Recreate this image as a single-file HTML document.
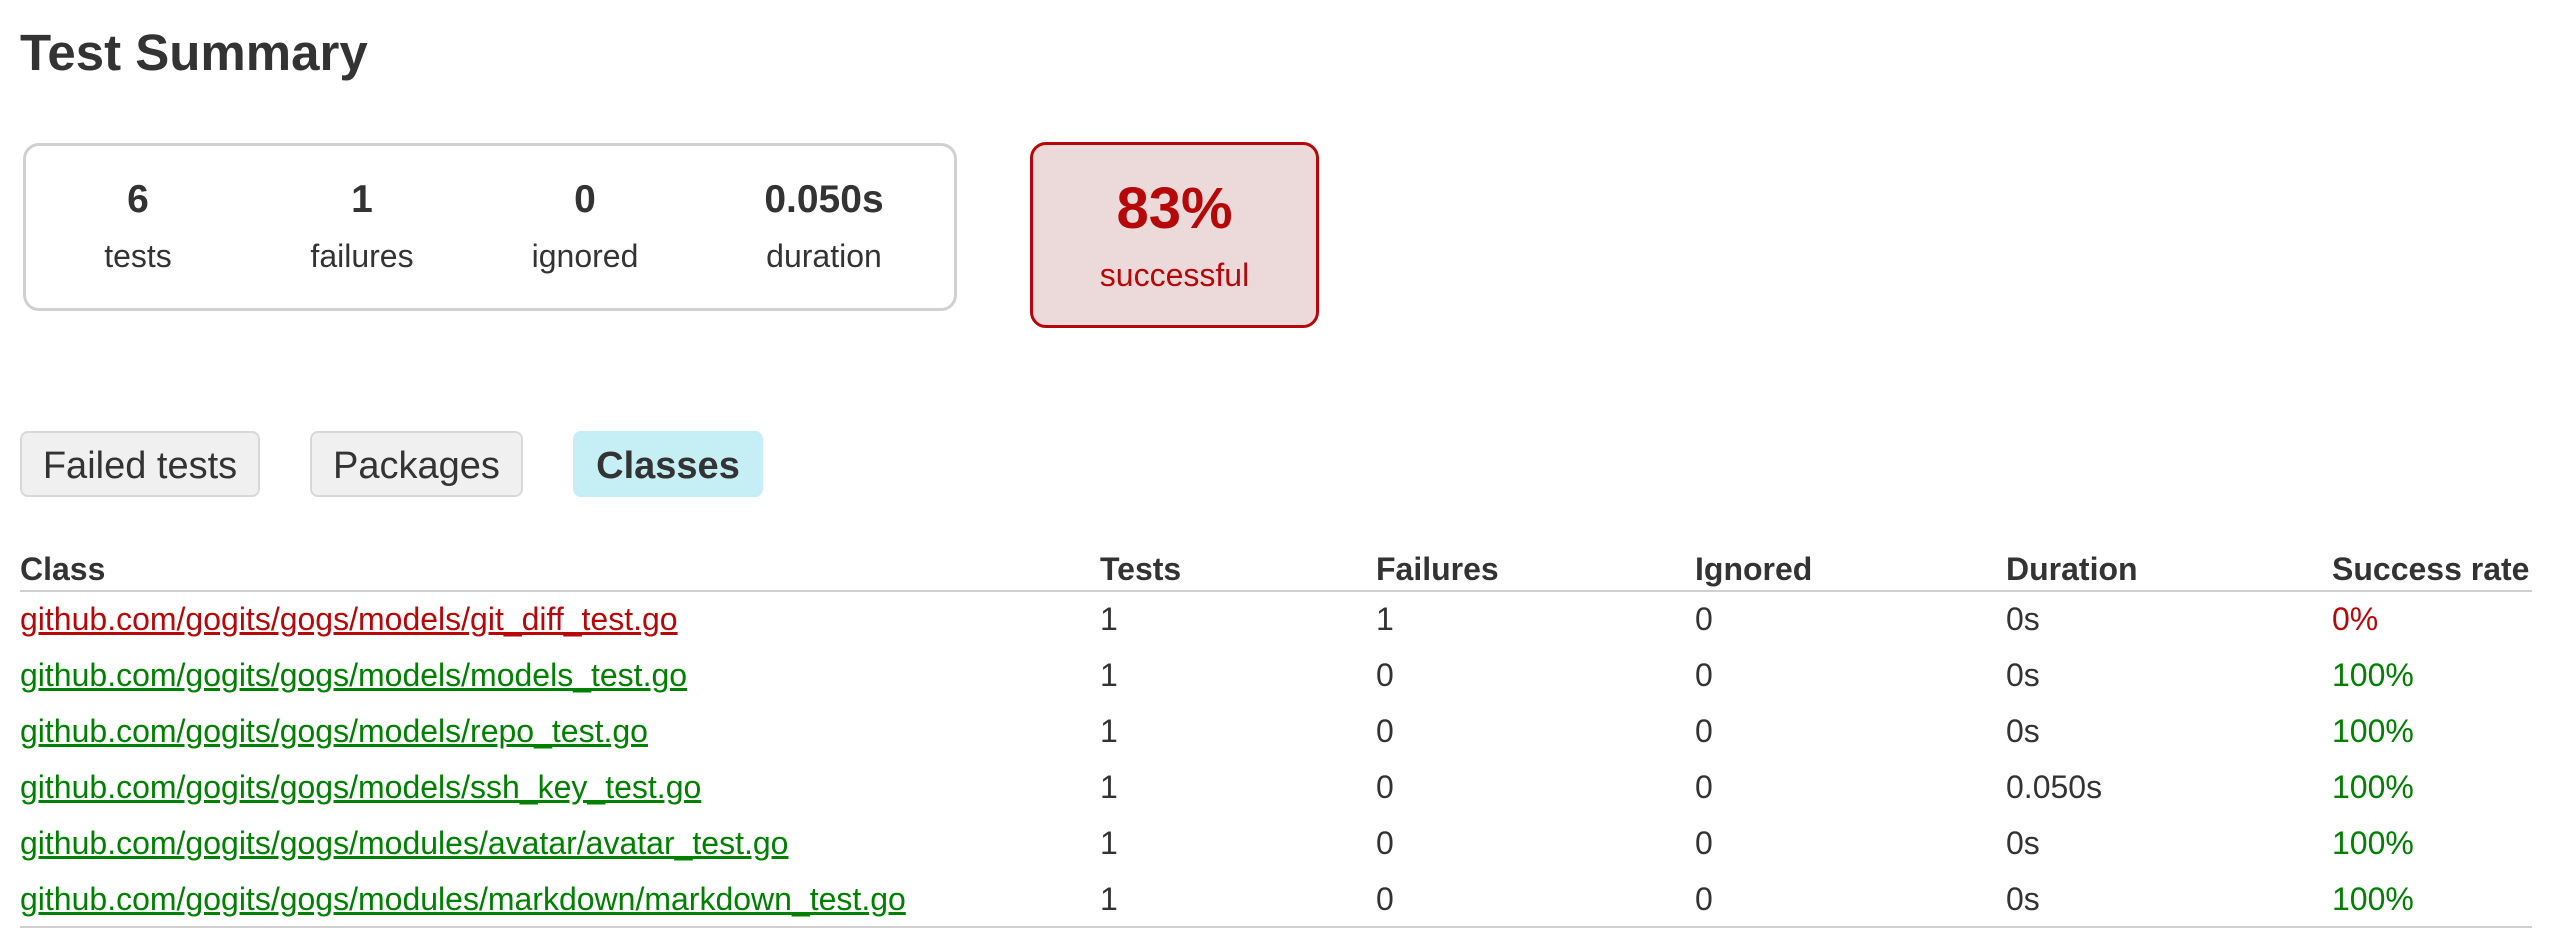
<!DOCTYPE html>
<html><head><meta charset="utf-8"><style>
body{margin:0;width:2568px;height:952px;background:#fff;font-family:"Liberation Sans",Arial,sans-serif;color:#333;position:relative;overflow:hidden}
.a{position:absolute;white-space:nowrap}
h1{position:absolute;left:20px;top:23px;margin:0;font-size:51px;font-weight:bold;color:#333}
.box{position:absolute;left:23px;top:143px;width:928px;height:162px;border:3px solid #d0d0d0;border-radius:16px}
.cnt{position:absolute;top:178px;width:200px;text-align:center;margin-left:-100px}
.cnt b{display:block;font-size:39px;line-height:44px}
.cnt span{display:block;font-size:32px;line-height:40px;margin-top:14px}
.succ{position:absolute;left:1030px;top:142px;width:283px;height:180px;border:3px solid #b60808;border-radius:16px;background:#ecdada;color:#b60808;text-align:center}
.tab{position:absolute;top:431px;height:66px;line-height:66px;font-size:38px;text-align:center;border:2px solid #d8d8d8;border-radius:8px;background:#f0f0f0;box-sizing:border-box}
.th{position:absolute;top:550px;font-size:32px;font-weight:bold;line-height:38px}
.td{position:absolute;font-size:32px;line-height:38px}
a{text-decoration:underline}
.r{color:#b60808}.g{color:#008000}
</style></head><body>
<h1>Test Summary</h1>
<div class="box"></div>
<div class="cnt" style="left:138px"><b>6</b><span>tests</span></div>
<div class="cnt" style="left:362px"><b>1</b><span>failures</span></div>
<div class="cnt" style="left:585px"><b>0</b><span>ignored</span></div>
<div class="cnt" style="left:824px"><b>0.050s</b><span>duration</span></div>
<div class="succ"><div style="font-size:58px;font-weight:bold;margin-top:32px;line-height:64px">83%</div><div style="font-size:32px;margin-top:16px">successful</div></div>
<div class="tab" style="left:20px;width:240px">Failed tests</div>
<div class="tab" style="left:310px;width:213px">Packages</div>
<div class="tab" style="left:573px;width:190px;background:#c5eff5;border-color:#c5eff5;font-weight:bold">Classes</div>
<div class="th" style="left:20px">Class</div>
<div class="th" style="left:1100px">Tests</div>
<div class="th" style="left:1376px">Failures</div>
<div class="th" style="left:1695px">Ignored</div>
<div class="th" style="left:2006px">Duration</div>
<div class="th" style="left:2332px">Success rate</div>
<div class="a" style="left:20px;top:590px;width:2512px;height:2px;background:#d0d0d0"></div>
<div class="a" style="left:20px;top:926px;width:2512px;height:2px;background:#d0d0d0"></div>
<div id="rows"></div>
<script>
var rows=[["github.com/gogits/gogs/models/git_diff_test.go","1","0s","0%","r"],
["github.com/gogits/gogs/models/models_test.go","0","0s","100%","g"],
["github.com/gogits/gogs/models/repo_test.go","0","0s","100%","g"],
["github.com/gogits/gogs/models/ssh_key_test.go","0","0.050s","100%","g"],
["github.com/gogits/gogs/modules/avatar/avatar_test.go","0","0s","100%","g"],
["github.com/gogits/gogs/modules/markdown/markdown_test.go","0","0s","100%","g"]];
var h="";rows.forEach(function(r,i){var t=600+i*56;
h+='<a class="td '+r[4]+'" style="left:20px;top:'+t+'px">'+r[0]+'</a>';
h+='<div class="td" style="left:1100px;top:'+t+'px">1</div>';
h+='<div class="td" style="left:1376px;top:'+t+'px">'+r[1]+'</div>';
h+='<div class="td" style="left:1695px;top:'+t+'px">0</div>';
h+='<div class="td" style="left:2006px;top:'+t+'px">'+r[2]+'</div>';
h+='<div class="td '+r[4]+'" style="left:2332px;top:'+t+'px">'+r[3]+'</div>';});
document.getElementById("rows").innerHTML=h;
</script>
</body></html>
